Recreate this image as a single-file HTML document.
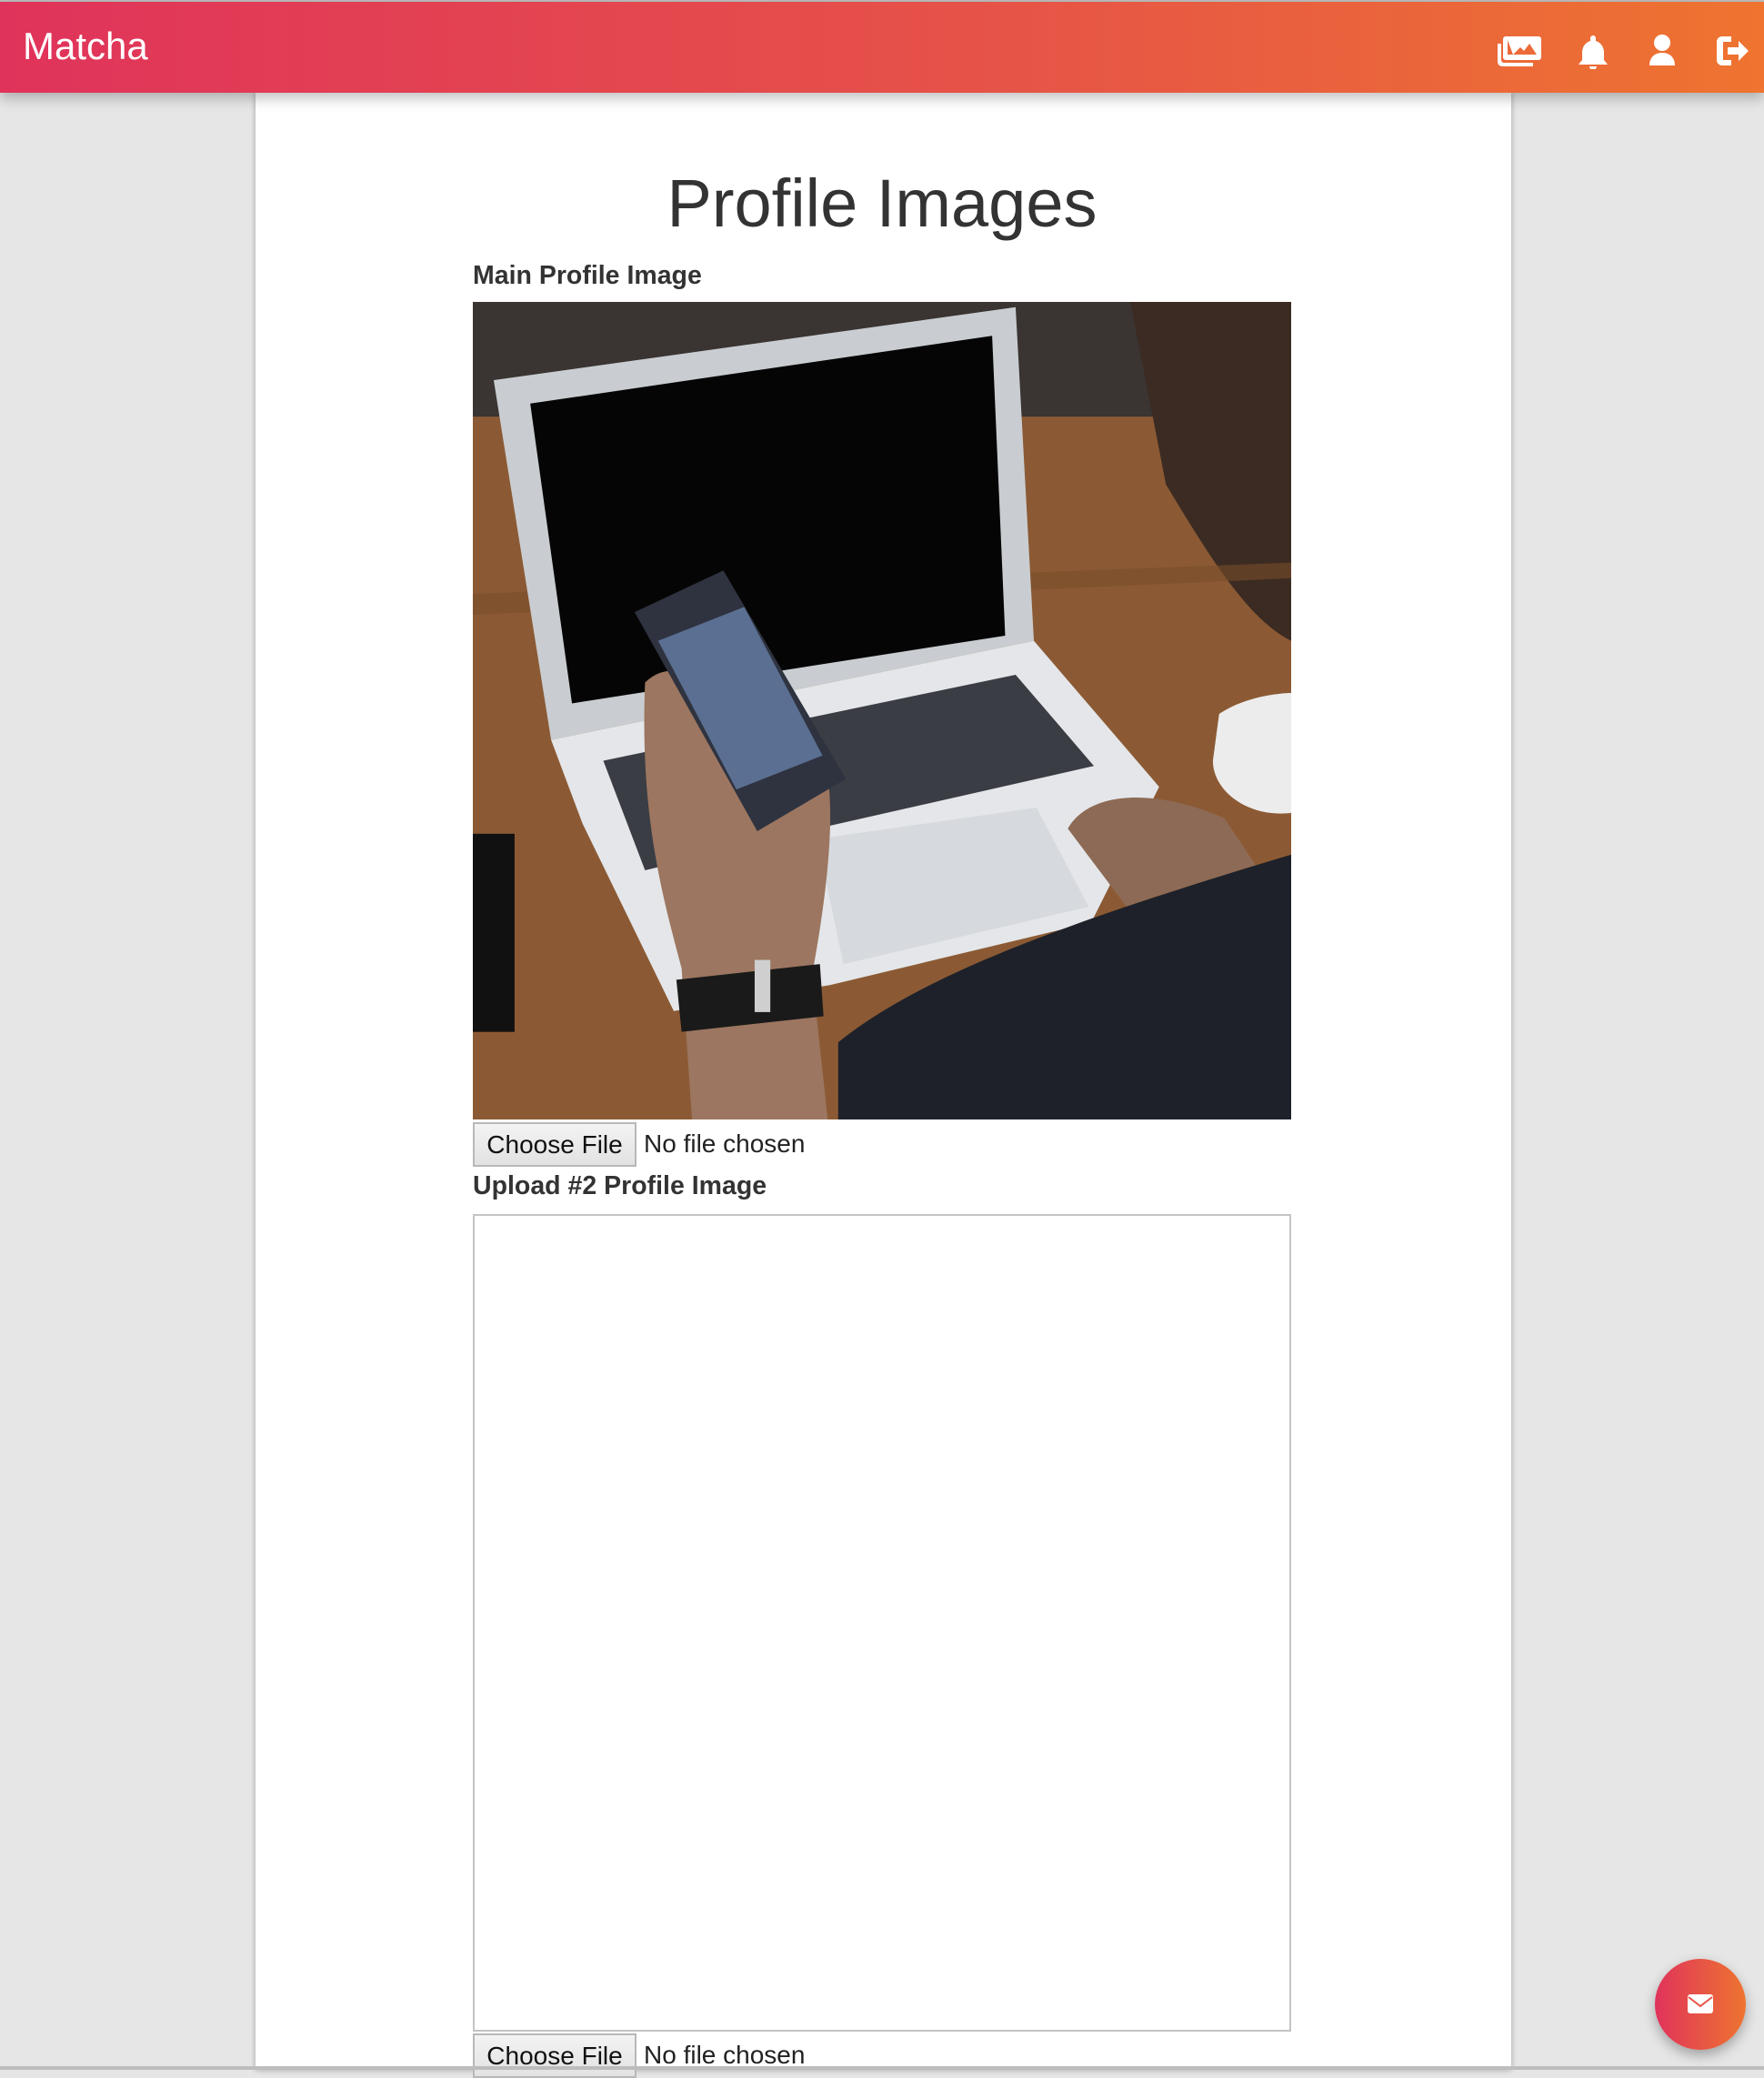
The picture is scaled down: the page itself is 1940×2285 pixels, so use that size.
<!DOCTYPE html>
<html><head><meta charset="utf-8"><style>
*{margin:0;padding:0;box-sizing:border-box}
html,body{width:1940px;height:2276px;overflow:hidden;background:#e6e6e6;font-family:"Liberation Sans",Arial,sans-serif}
.top{position:absolute;left:0;top:0;width:1940px;height:2px;background:#bdbdbd}
.hdr{position:absolute;left:0;top:2px;width:1940px;height:100px;background:linear-gradient(90deg,#e0335b,#e65248 55%,#ee7430);box-shadow:0 6px 14px rgba(0,0,0,.25);z-index:2}
.brand{position:absolute;left:25px;top:25px;color:#fff;font-size:42px}
.card{position:absolute;left:281px;top:102px;width:1381px;height:2174px;background:#fff;box-shadow:0 0 6px rgba(0,0,0,.3)}
h1{position:absolute;left:0;width:1940px;top:181px;text-align:center;font-size:74px;font-weight:normal;color:#333;line-height:86px}
.lbl{position:absolute;left:520px;font-size:28.5px;font-weight:bold;color:#333}
.btn{position:absolute;left:520px;width:180px;height:49px;background:linear-gradient(#f3f3f3,#e2e2e2);border:2px solid #b8b8b8;font-size:28px;color:#111;text-align:center;line-height:45px}
.nf{position:absolute;left:708px;font-size:28px;color:#222}
.box{position:absolute;left:520px;top:1335px;width:900px;height:899px;border:2px solid #c4c4c4;background:#fff}
.fab{position:absolute;left:1820px;top:2154px;width:100px;height:100px;border-radius:50%;background:linear-gradient(90deg,#e0335b,#ee7430);box-shadow:0 6px 14px rgba(0,0,0,.3)}
.bot{position:absolute;left:0;top:2272px;width:1940px;height:4px;background:#bdbdbd}
</style></head><body>
<div class="top"></div>
<div class="hdr"><div class="brand">Matcha</div>
<svg style="position:absolute;left:1646px;top:34px" width="300" height="40" viewBox="0 0 300 40" fill="#fff">
<path d="M10 4h36a3 3 0 0 1 3 3v20a3 3 0 0 1-3 3H10a3 3 0 0 1-3-3V7a3 3 0 0 1 3-3zm2 4v16h32l-8-12-6 8-4-4-8 8z" fill-rule="evenodd"/>
<circle cx="17" cy="11" r="2.5"/>
<path d="M1 12h4v18a3 3 0 0 0 3 3h32v4H6a5 5 0 0 1-5-5z"/>
<path d="M106 3a3 3 0 0 1 3 3v3c6 2 9 7 9 13v8l4 5H90l4-5v-8c0-6 3-11 9-13V6a3 3 0 0 1 3-3zm-4 34h8a4 4 0 0 1-8 0z"/>
<circle cx="182" cy="11" r="9"/><path d="M168 36c0-8 5-14 14-14s14 6 14 14z"/>
<path d="M248 4h10v6h-9v20h9v6h-10a6 6 0 0 1-6-6V10a6 6 0 0 1 6-6zm6 12h12v-7l11 11-11 11v-7h-12z"/>
</svg></div>
<div class="card"></div>
<h1>Profile Images</h1>
<div class="lbl" style="top:287px">Main Profile Image</div>
<svg style="position:absolute;left:520px;top:332px" width="900" height="899" viewBox="0 0 1568 1568" preserveAspectRatio="none">
<rect width="1568" height="1568" fill="#8b5a34"/>
<rect width="1568" height="220" fill="#3a3432"/>
<path d="M1260 0h308v650c-80-40-150-150-240-300z" fill="#3b2b22"/>
<path d="M0 560l1568-60v30L0 600z" fill="#7a4c2b" opacity=".6"/>
<path d="M40 150L1040 10l35 640-925 190z" fill="#c9cdd1"/>
<path d="M110 195L995 65l25 575-830 130z" fill="#050505"/>
<path d="M150 840l925-190 240 280-130 260-500 120-300 50-175-360z" fill="#e4e6e9"/>
<path d="M250 880l790-165 150 175-530 120-330 80z" fill="#3a3d44"/>
<path d="M660 1030l420-60 100 190-470 110z" fill="#d6d9dd"/>
<path d="M1430 790c60-40 138-40 138-40v230c-80 10-150-40-150-100z" fill="#ececec"/>
<rect x="0" y="1020" width="80" height="380" fill="#111"/>
<path d="M1140 1010c40-70 160-80 300-20l80 120-260 60z" fill="#8d6a55"/>
<path d="M700 1568V1420c150-120 400-220 868-360v508z" fill="#1e2129"/>
<path d="M330 730c40-40 90-20 110 10l230 130c30 80 10 260-20 420l30 278H420l-20-290c-40-150-80-300-70-548z" fill="#9c7660"/>
<path d="M310 595l170-80 235 400-170 100z" fill="#2f3340"/>
<path d="M355 650l165-65 150 285-165 65z" fill="#5a6f91"/>
<path d="M390 1300l275-30 7 100-272 30z" fill="#1a1a1a"/>
<rect x="540" y="1262" width="30" height="100" fill="#cfcfcf"/>
</svg>
<div class="btn" style="top:1234px">Choose File</div>
<div class="nf" style="top:1242px">No file chosen</div>
<div class="lbl" style="top:1288px">Upload #2 Profile Image</div>
<div class="box"></div>
<div class="btn" style="top:2236px">Choose File</div>
<div class="nf" style="top:2244px">No file chosen</div>
<div class="fab"><svg style="position:absolute;left:36px;top:39px" width="28" height="21" viewBox="0 0 28 21"><rect width="28" height="21" rx="3" fill="#fff"/><path d="M1 3l13 10 13-10" stroke="#e65248" stroke-width="2" fill="none"/></svg></div>
<div class="bot"></div>
</body></html>
